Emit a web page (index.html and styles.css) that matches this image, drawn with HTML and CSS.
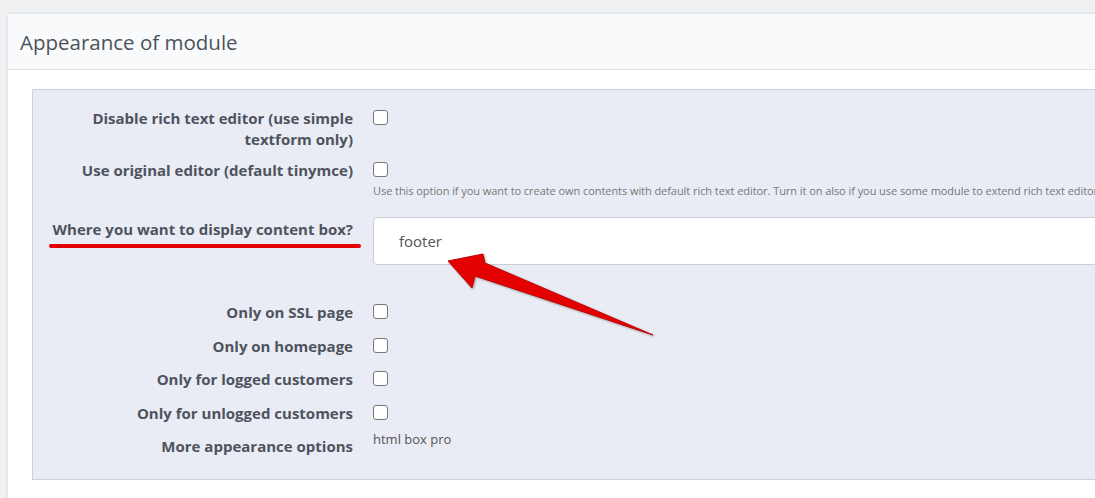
FILE: index.html
```html
<!DOCTYPE html>
<html>
  <head>
    <meta charset="utf-8">
    <title>Appearance of module</title>
    <link rel="stylesheet" href="styles.css">
  </head>
  <body>
    <div class="panel">
      <div class="panel-heading">Appearance of module</div>
      <div class="panel-body">
        <div class="form-wrapper">
          <div class="form-group first">
            <label class="control-label">Disable rich text editor (use simple textform only)</label>
            <div class="control"><span class="checkbox"></span></div>
          </div>
          <div class="form-group">
            <label class="control-label">Use original editor (default tinymce)</label>
            <div class="control">
              <span class="checkbox"></span>
              <p class="help-block">Use this option if you want to create own contents with default rich text editor. Turn it on also if you use some module to extend rich text editor</p>
            </div>
          </div>
          <div class="form-group where">
            <label class="control-label"><span class="marked">Where you want to display content box?<span class="underline"></span></span></label>
            <div class="control">
              <div class="select">footer</div>
            </div>
            <svg class="arrow" width="240" height="100" viewBox="0 0 240 100">
              <polygon points="1,13 36,6 38,15 206,87 28,28 25,40" fill="#e30000" stroke="#c40000" stroke-width="1" stroke-linejoin="round"/>
            </svg>
          </div>
          <div class="form-group small">
            <label class="control-label">Only on SSL page</label>
            <div class="control"><span class="checkbox"></span></div>
          </div>
          <div class="form-group small">
            <label class="control-label">Only on homepage</label>
            <div class="control"><span class="checkbox"></span></div>
          </div>
          <div class="form-group small">
            <label class="control-label">Only for logged customers</label>
            <div class="control"><span class="checkbox"></span></div>
          </div>
          <div class="form-group small">
            <label class="control-label">Only for unlogged customers</label>
            <div class="control"><span class="checkbox"></span></div>
          </div>
          <div class="form-group small">
            <label class="control-label">More appearance options</label>
            <div class="control"><span class="plain">html box pro</span></div>
          </div>
        </div>
      </div>
    </div>
  </body>
</html>
```

FILE: styles.css
```css
*, *:before, *:after {
  box-sizing: border-box;
}
html, body {
  margin: 0;
  padding: 0;
}
body {
  background: #eff1f2;
  font-family: "Open Sans", "Liberation Sans", sans-serif;
  color: #555;
  overflow: hidden;
  height: 498px;
  padding: 13px 0 0 7px;
}
.panel {
  width: 1140px;
  background: #fff;
  border: 1px solid #e4e7ea;
  border-radius: 4px 0 0 0;
  box-shadow: 0 0 3px rgba(0, 0, 0, 0.08);
}
.panel-heading {
  height: 56px;
  padding: 0 12px;
  line-height: 56px;
  font-size: 20.5px;
  color: #4d5259;
  background: #f9fafc;
  border-bottom: 1px solid #dde3e5;
}
.panel-body {
  padding: 19px 0 20px 24px;
}
.form-wrapper {
  background: #e9ecf4;
  border: 1px solid #cdd0d8;
  padding: 18px 0 22px 0;
}
.form-group {
  position: relative;
  display: grid;
  grid-template-columns: 320px 1fr;
  column-gap: 20px;
  margin-top: 10px;
}
.form-group.first {
  margin-top: 0;
}
.form-group.where {
  margin-top: 19px;
}
.form-group.small {
  margin-top: 12.5px;
}
.form-group.where + .small {
  margin-top: 37px;
}
.control-label {
  text-align: right;
  font-weight: bold;
  font-size: 15px;
  line-height: 21px;
  color: #4e535e;
}
.where .control-label {
  padding-top: 2px;
}
.marked {
  position: relative;
  display: inline-block;
}
.control {
  min-height: 21px;
}
.checkbox {
  display: block;
  width: 15px;
  height: 15px;
  margin-top: 2px;
  background: #fff;
  border: 1px solid #777;
  border-radius: 3px;
}
.help-block {
  margin: 6px 0 0 0;
  font-size: 11px;
  line-height: 15px;
  letter-spacing: -0.06px;
  color: #777;
  white-space: nowrap;
}
.select {
  height: 48px;
  line-height: 46px;
  padding-left: 25px;
  font-size: 15px;
  color: #555;
  background: #fff;
  border: 1px solid #c9ced6;
  border-radius: 4px;
}
.plain {
  display: block;
  margin-top: -4px;
  font-size: 13px;
  line-height: 15px;
  color: #555;
}
/* annotation */
.underline {
  position: absolute;
  left: -4px;
  right: -8px;
  top: 25px;
  height: 4px;
  border-radius: 2px;
  background: #e30000;
}
.arrow {
  position: absolute;
  left: 414px;
  top: 31px;
  filter: drop-shadow(1px 1px 1px rgba(0, 0, 0, 0.35));
}
```
